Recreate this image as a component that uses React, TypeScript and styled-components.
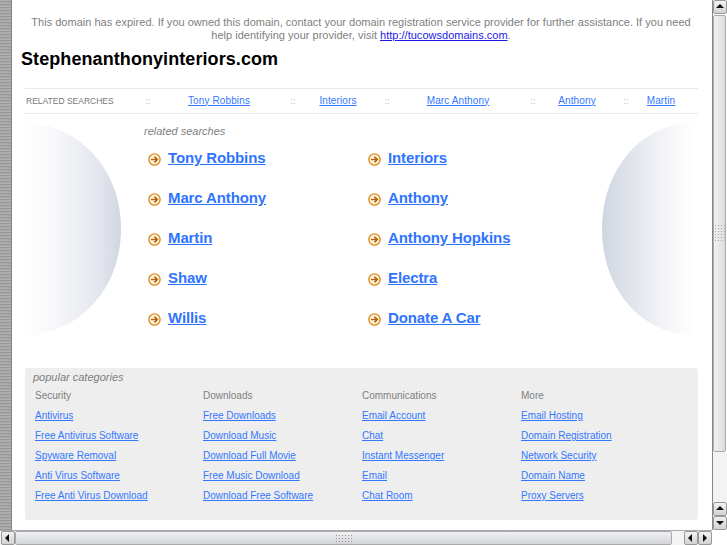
import React from "react";
import styled, { createGlobalStyle } from "styled-components";

const Global = createGlobalStyle`
  html, body { margin: 0; padding: 0; background: #fff; overflow: hidden; }
  body { font-family: "Liberation Sans", Arial, sans-serif; }
`;

const Shell = styled.div`
  width: 727px;
  height: 545px;
  display: grid;
  grid-template-columns: 12px 700px 15px;
  grid-template-rows: 530px 15px;
  overflow: hidden;
`;

const FrameStrip = styled.div`
  background: repeating-linear-gradient(to bottom, #b0b0b0 0 1px, #969696 1px 2px, #a8a8a8 2px 3px);
  border-right: 1px solid #808080;
  box-sizing: border-box;
`;

const Content = styled.main`
  padding-top: 16px;
  background: #fff;
  overflow: hidden;
`;

const Notice = styled.p`
  margin: 0;
  padding: 0 20px 0 18px;
  height: 27px;
  text-align: center;
  font-size: 11px;
  line-height: 13px;
  letter-spacing: 0.015px;
  color: #808080;
  a { color: #1a1ae6; }
`;

const Title = styled.h1`
  margin: 5px 0 0 9px;
  height: 23px;
  font-size: 18px;
  line-height: 23px;
  font-weight: bold;
  color: #000;
  letter-spacing: 0.08px;
`;

const RelatedBar = styled.nav`
  margin: 17px 14px 0 13px;
  height: 24px;
  border-top: 1px solid #eaeaea;
  border-bottom: 1px solid #eaeaea;
  display: grid;
  grid-template-columns: 119px 8px 134px 14px 76px 22px 120px 30px 58px 40px 30px;
  align-items: center;
  font-size: 10px;
  line-height: 22px;
`;

const BarLabel = styled.span`
  font-size: 8.5px;
  color: #777;
  padding-left: 1px;
  white-space: nowrap;
  margin-top: -1px;
`;

const Sep = styled.span`
  color: #bbb;
  font-size: 9px;
  text-align: center;
  margin-top: -1px;
`;

const BarLink = styled.a`
  color: #3377ff;
  text-decoration: underline;
  text-align: center;
  white-space: nowrap;
  letter-spacing: 0.12px;
  margin-top: -1px;
`;

const Middle = styled.section`
  margin: 8px 17px 0 13px;
  height: 214px;
  display: grid;
  grid-template-columns: 96px 1fr 93px;
  align-items: start;
`;

const Globe = styled.svg`
  display: block;
`;

const Results = styled.div`
  padding: 3px 0 0 23px;
`;

const ResultsLabel = styled.div`
  font-size: 11px;
  line-height: 13px;
  font-style: italic;
  color: #808080;
`;

const ResultGrid = styled.div`
  margin: 9px 0 0 4px;
  display: grid;
  grid-template-columns: 220px 220px;
  grid-auto-rows: 40px;
`;

const ResultItem = styled.div`
  display: flex;
  align-items: flex-start;
  height: 40px;
  gap: 7px;
`;

const ArrowIcon = styled.svg`
  flex: none;
  margin-top: 6px;
`;

const ResultLink = styled.a`
  font-size: 15px;
  line-height: 21px;
  font-weight: bold;
  color: #2f74ff;
  text-decoration: underline;
  letter-spacing: -0.12px;
`;

const Panel = styled.section`
  margin: 32px 14px 0 13px;
  height: 152px;
  box-sizing: border-box;
  padding: 3px 8px 0 8px;
  background: #eeeeee;
  border-radius: 3px;
`;

const PanelTitle = styled.div`
  font-size: 11px;
  line-height: 13px;
  font-style: italic;
  color: #808080;
`;

const Columns = styled.div`
  margin-top: 2px;
  padding-left: 2px;
  display: grid;
  grid-template-columns: 168px 159px 159px 1fr;
`;

const Column = styled.div`
  display: flex;
  flex-direction: column;
`;

const ColumnHead = styled.div`
  height: 20px;
  line-height: 20px;
  font-size: 10px;
  color: #808080;
`;

const ColumnLink = styled.a`
  height: 20px;
  line-height: 20px;
  font-size: 10px;
  color: #3377ff;
  text-decoration: underline;
  white-space: nowrap;
  align-self: flex-start;
`;

const VScroll = styled.div`
  display: flex;
  flex-direction: column;
  background: #fff;
  border-left: 1px solid #888;
  box-sizing: border-box;
  width: 15px;
`;

const HScroll = styled.div`
  grid-column: 1 / 3;
  display: flex;
  align-items: stretch;
  padding-left: 1px;
  background: #f4f4f4;
  border-top: 1px solid #aaa;
  box-sizing: border-box;
`;

const Corner = styled.div`
  background: #fff;
`;

const StepButton = styled.button`
  flex: none;
  width: 14px;
  height: 14px;
  padding: 0;
  display: flex;
  align-items: center;
  justify-content: center;
  border: 1px solid #999;
  border-radius: 2px;
  background: linear-gradient(to bottom, #f2f2f4, #d2d2d6);
`;

const VThumb = styled.div`
  flex: 1;
  margin: 1px 1px 0 0;
  background: linear-gradient(to right, #f0f1f4, #dcdde2);
  border: 1px solid #aaa;
  border-radius: 2px;
  display: flex;
  align-items: center;
  justify-content: center;
`;

const VTrack = styled.div`
  flex: none;
  height: 50px;
  background: #f3f3f3;
`;

const HThumb = styled.div`
  flex: 1;
  background: linear-gradient(to bottom, #f0f1f4, #d4d5da);
  border: 1px solid #aaa;
  border-radius: 2px;
  display: flex;
  align-items: center;
  justify-content: center;
`;

const HTrack = styled.div`
  flex: none;
  width: 12px;
`;

const Grip = () => (
  <svg width="16" height="7" viewBox="0 0 16 7">
    {[0, 3, 6].map((y) =>
      [0, 3, 6, 9, 12, 15].map((x) => <rect key={`${x}-${y}`} x={x} y={y} width="1" height="1" fill="#999" />)
    )}
  </svg>
);

const GripV = () => (
  <svg width="10" height="17" viewBox="0 0 10 17">
    {[0, 3, 6, 9, 12, 15].map((y) =>
      [0, 3, 6, 9].map((x) => <rect key={`${x}-${y}`} x={x} y={y} width="1" height="1" fill="#aaa" />)
    )}
  </svg>
);

const Tri = ({ dir }: { dir: "up" | "down" | "left" | "right" }) => {
  const pts = {
    up: "1,6 9,6 5,2",
    down: "1,3 9,3 5,7",
    left: "6,1 6,9 2,5",
    right: "3,1 3,9 7,5",
  }[dir];
  return (
    <svg width="10" height="10" viewBox="0 0 10 10">
      <polygon points={pts} fill="#111" />
    </svg>
  );
};

const Arrow = () => (
  <ArrowIcon width="13" height="13" viewBox="0 0 13 13">
    <circle cx="6.5" cy="6.5" r="5.6" fill="#fff6e6" stroke="#e08a1e" strokeWidth="1.4" />
    <path d="M3 6.5h6M6.4 3.6l2.9 2.9-2.9 2.9" fill="none" stroke="#b8660c" strokeWidth="1.7" />
  </ArrowIcon>
);

const GlobeLeft = () => (
  <Globe width="96" height="214" viewBox="0 0 96 214">
    <defs>
      <linearGradient id="gl" x1="0" x2="1" y1="0" y2="0">
        <stop offset="0" stopColor="#ffffff" />
        <stop offset="0.35" stopColor="#f5f6f9" />
        <stop offset="0.75" stopColor="#e4e7ee" />
        <stop offset="1" stopColor="#d0d6e2" />
      </linearGradient>
    </defs>
    <path d="M0 0 C 58 4 96 50 96 107 C 96 164 58 210 0 214 Z" fill="url(#gl)" />
  </Globe>
);

const GlobeRight = () => (
  <Globe width="93" height="214" viewBox="0 0 93 214">
    <defs>
      <linearGradient id="gr" x1="0" x2="1" y1="0" y2="0">
        <stop offset="0" stopColor="#d0d6e2" />
        <stop offset="0.3" stopColor="#dfe3eb" />
        <stop offset="0.65" stopColor="#f3f4f8" />
        <stop offset="1" stopColor="#ffffff" />
      </linearGradient>
    </defs>
    <path d="M93 0 C 36 2 0 50 0 107 C 0 164 36 212 93 214 Z" fill="url(#gr)" />
  </Globe>
);

const barItems = ["Tony Robbins", "Interiors", "Marc Anthony", "Anthony", "Martin"];
const results = [
  "Tony Robbins", "Interiors",
  "Marc Anthony", "Anthony",
  "Martin", "Anthony Hopkins",
  "Shaw", "Electra",
  "Willis", "Donate A Car",
];
const categories = [
  { head: "Security", links: ["Antivirus", "Free Antivirus Software", "Spyware Removal", "Anti Virus Software", "Free Anti Virus Download"] },
  { head: "Downloads", links: ["Free Downloads", "Download Music", "Download Full Movie", "Free Music Download", "Download Free Software"] },
  { head: "Communications", links: ["Email Account", "Chat", "Instant Messenger", "Email", "Chat Room"] },
  { head: "More", links: ["Email Hosting", "Domain Registration", "Network Security", "Domain Name", "Proxy Servers"] },
];

export default function App() {
  return (
    <Shell>
      <Global />
      <FrameStrip />
      <Content>
        <Notice>
          This domain has expired. If you owned this domain, contact your domain registration service provider for further assistance. If you need help identifying your provider, visit <a href="#">http://tucowsdomains.com</a>.
        </Notice>
        <Title>Stephenanthonyinteriors.com</Title>
        <RelatedBar>
          <BarLabel>RELATED SEARCHES</BarLabel>
          {barItems.map((t) => (
            <React.Fragment key={t}>
              <Sep>::</Sep>
              <BarLink href="#">{t}</BarLink>
            </React.Fragment>
          ))}
        </RelatedBar>
        <Middle>
          <GlobeLeft />
          <Results>
            <ResultsLabel>related searches</ResultsLabel>
            <ResultGrid>
              {results.map((t) => (
                <ResultItem key={t}>
                  <Arrow />
                  <ResultLink href="#">{t}</ResultLink>
                </ResultItem>
              ))}
            </ResultGrid>
          </Results>
          <GlobeRight />
        </Middle>
        <Panel>
          <PanelTitle>popular categories</PanelTitle>
          <Columns>
            {categories.map((c) => (
              <Column key={c.head}>
                <ColumnHead>{c.head}</ColumnHead>
                {c.links.map((l) => (
                  <ColumnLink href="#" key={l}>{l}</ColumnLink>
                ))}
              </Column>
            ))}
          </Columns>
        </Panel>
      </Content>
      <VScroll>
        <StepButton><Tri dir="up" /></StepButton>
        <VThumb><GripV /></VThumb>
        <VTrack />
        <StepButton><Tri dir="up" /></StepButton>
        <StepButton><Tri dir="down" /></StepButton>
      </VScroll>
      <HScroll>
        <StepButton><Tri dir="left" /></StepButton>
        <HThumb><Grip /></HThumb>
        <HTrack />
        <StepButton><Tri dir="left" /></StepButton>
        <StepButton><Tri dir="right" /></StepButton>
      </HScroll>
      <Corner />
    </Shell>
  );
}
